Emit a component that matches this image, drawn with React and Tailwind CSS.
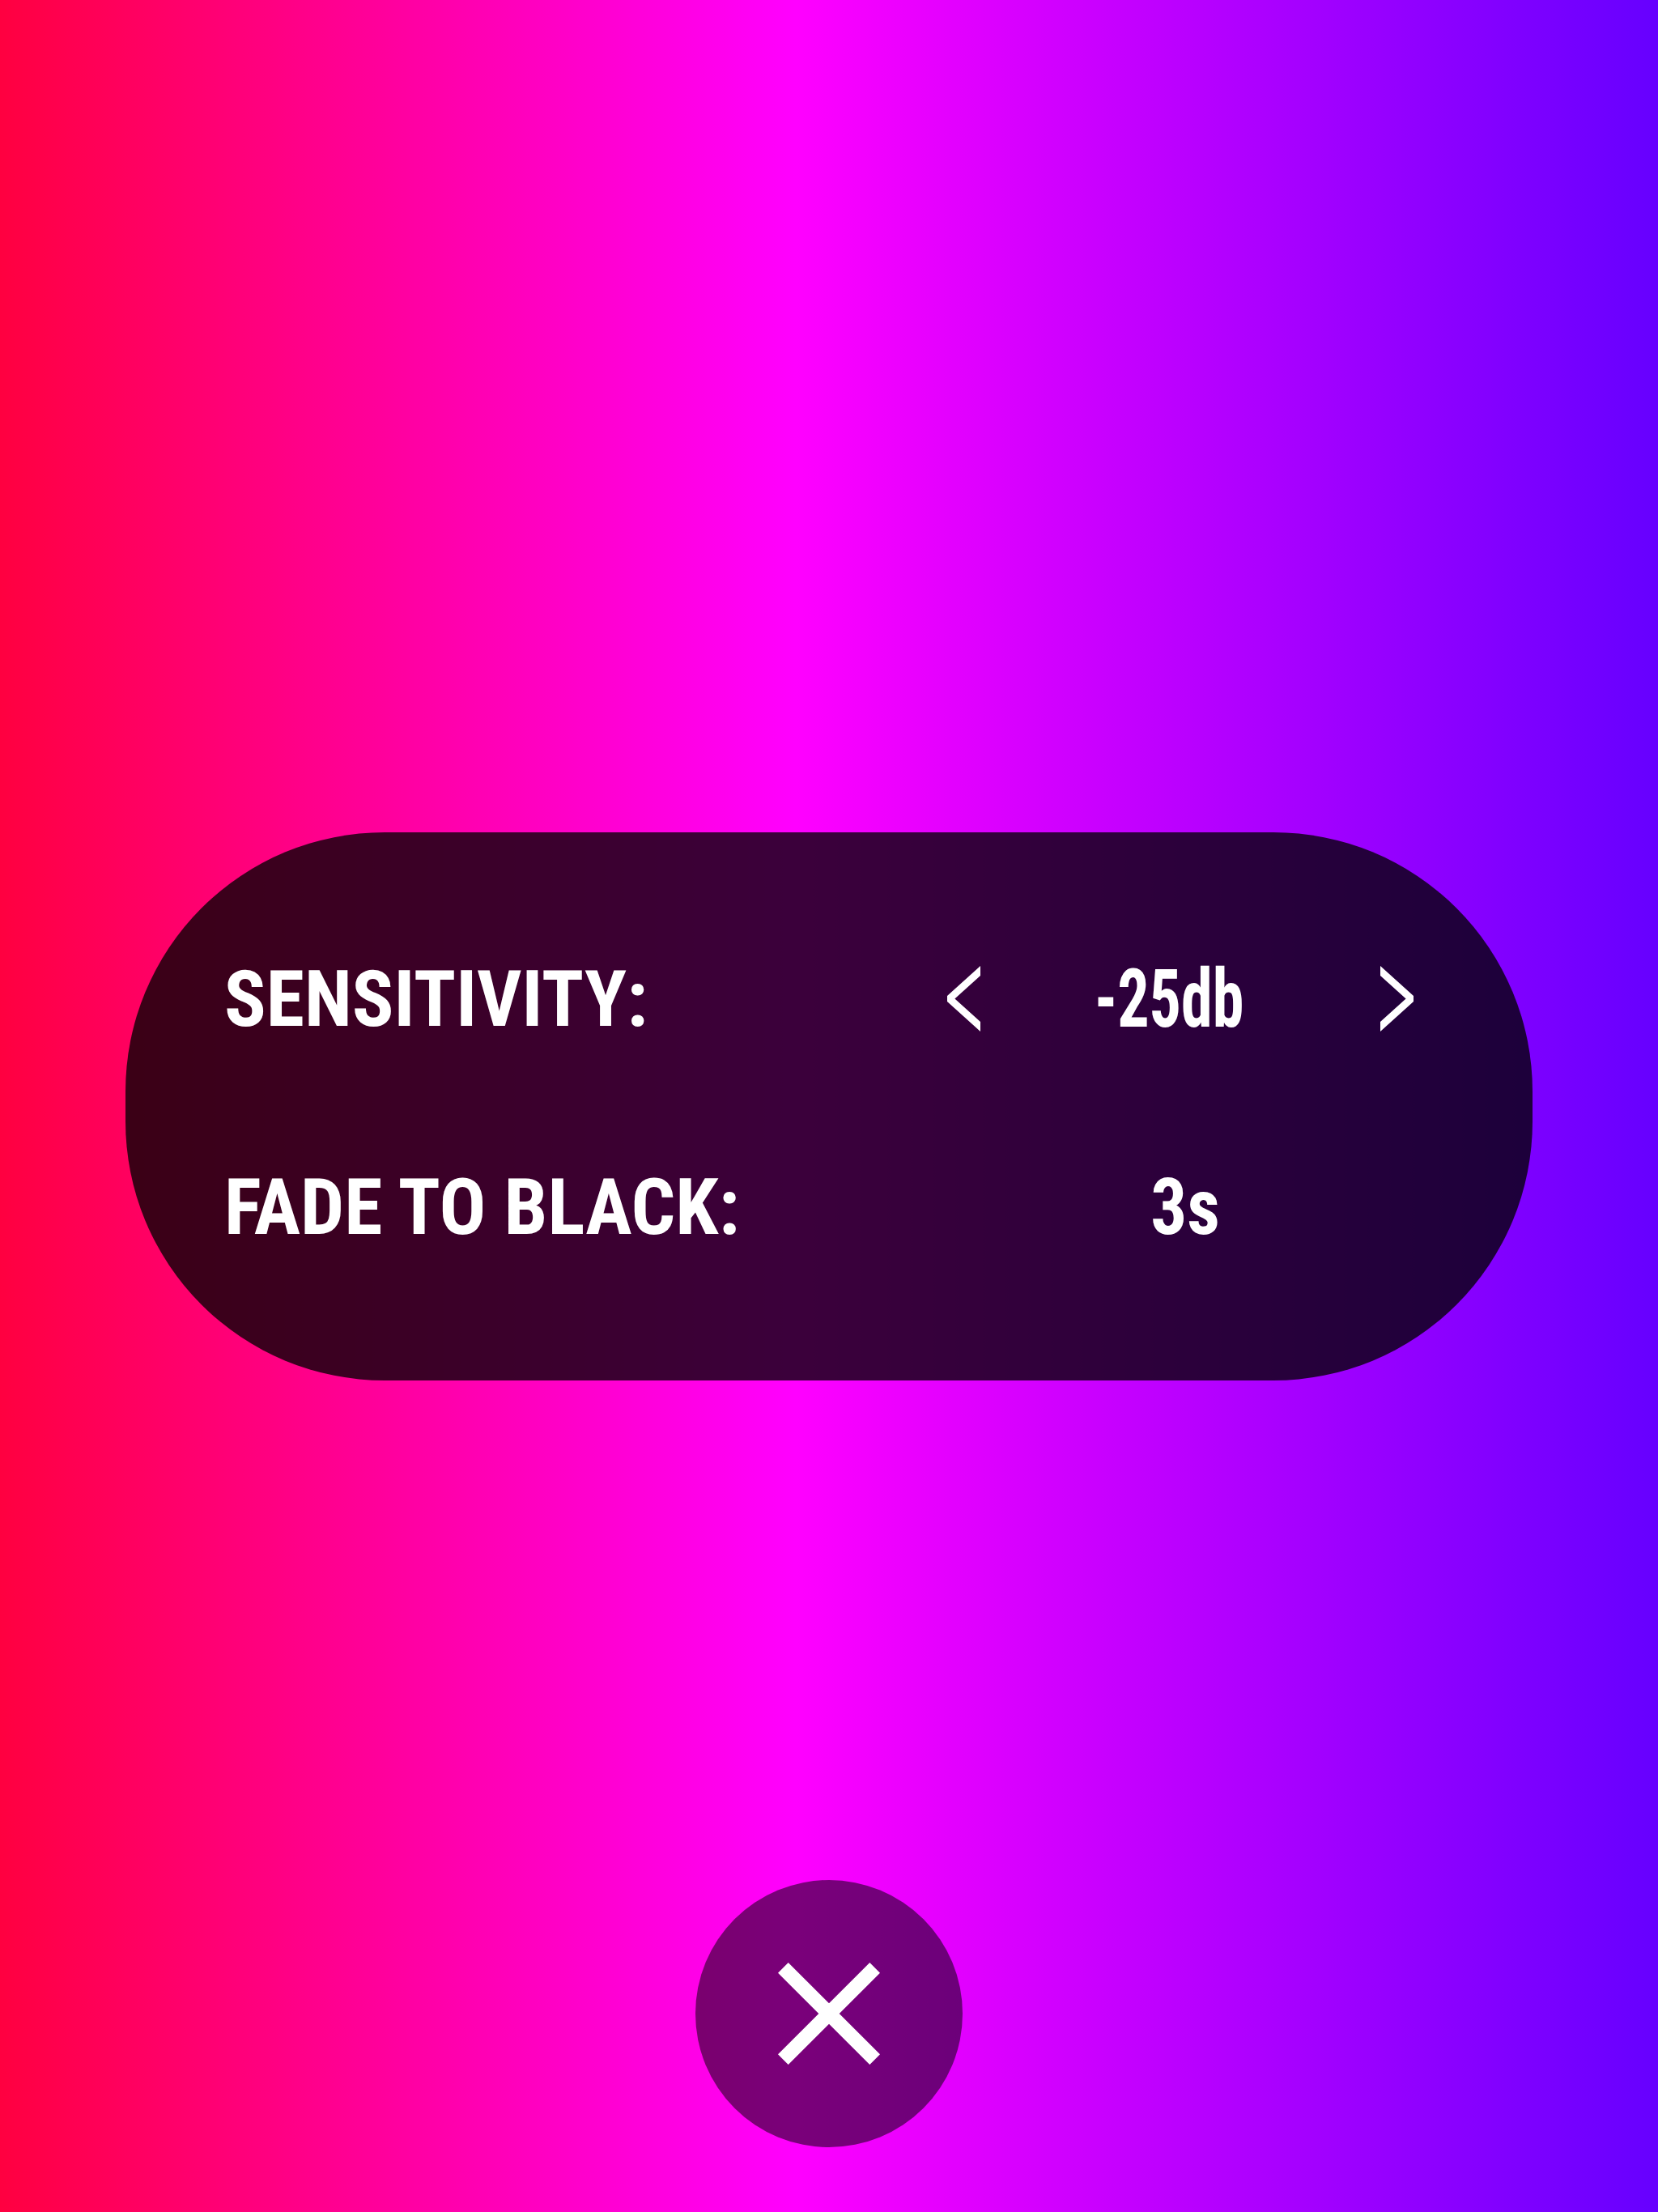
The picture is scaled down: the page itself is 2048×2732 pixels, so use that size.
function Chevron({ flip }) {
  return (
    <svg width="41" height="81" viewBox="0 0 41 81" className={flip ? "-scale-x-100" : ""}>
      <polygon points="41,0 41,12 9.4,40.5 41,69 41,81 0,44 0,37" fill="#ffffff" />
    </svg>
  );
}

function CloseIcon() {
  return (
    <svg width="216" height="216" viewBox="0 0 24 24">
      <path fill="#ffffff" d="M19 6.41L17.59 5 12 10.59 6.41 5 5 6.41 10.59 12 5 17.59 6.41 19 12 13.41 17.59 19 19 17.59 13.41 12z" />
    </svg>
  );
}

const font = { fontFamily: "'Roboto Condensed', 'Liberation Sans Narrow', Roboto, sans-serif" };

export default function App() {
  return (
    <div
      className="relative flex h-[2732px] w-[2048px] items-center justify-center bg-[linear-gradient(to_right,#ff0040,#ff00ff_48%,#6600ff)] text-white"
      style={font}
    >
      <div className="flex h-[677px] w-[1738px] flex-col justify-center gap-[187px] rounded-[320px] bg-black/[0.77] pb-[8px] pl-[122px]">
        <div className="flex h-[70px] items-center">
          <div className="w-[893px] text-[96px] font-bold leading-none">SENSITIVITY:</div>
          <Chevron />
          <div className="flex w-[494px] justify-center pr-[28px]">
            <span className="inline-block scale-x-[0.78] text-[100px] font-bold leading-none">-25db</span>
          </div>
          <Chevron flip />
        </div>
        <div className="flex h-[70px] items-center">
          <div className="w-[934px] text-[96px] font-bold leading-none">FADE TO BLACK:</div>
          <div className="flex w-[494px] justify-center pl-[12px]">
            <span className="inline-block scale-x-[0.93] text-[96px] font-bold leading-none">3s</span>
          </div>
        </div>
      </div>

      <button className="absolute bottom-[80px] left-[859px] flex h-[330px] w-[330px] items-center justify-center rounded-full bg-black/[0.52]">
        <CloseIcon />
      </button>
    </div>
  );
}
